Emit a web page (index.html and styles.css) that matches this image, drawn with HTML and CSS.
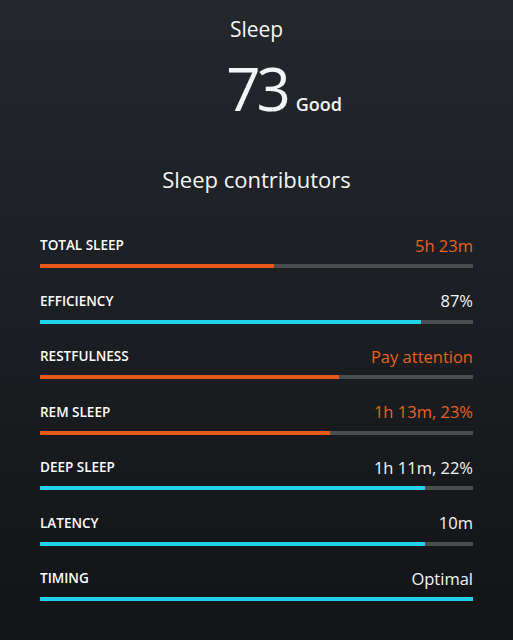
FILE: index.html
```html
<!DOCTYPE html>
<html lang="en">
<head>
  <meta charset="UTF-8" />
  <meta name="viewport" content="width=device-width, initial-scale=1.0"/>
  <title>Sleep</title>
  <link rel="stylesheet" href="styles.css">
</head>
<body>

  <header class="summary">
    <h1>Sleep</h1>
    <div class="score">
      <span></span>
      <span class="score-num">73</span>
      <span class="score-word">Good</span>
    </div>
  </header>

  <h2>Sleep contributors</h2>

  <ul class="contributors">
    <li>
      <div class="row"><span class="label">TOTAL SLEEP</span><span class="value warn">5h 23m</span></div>
      <div class="track"><div class="fill warn" style="width: 54%"></div></div>
    </li>
    <li>
      <div class="row"><span class="label">EFFICIENCY</span><span class="value">87%</span></div>
      <div class="track"><div class="fill" style="width: 88%"></div></div>
    </li>
    <li>
      <div class="row"><span class="label">RESTFULNESS</span><span class="value warn">Pay attention</span></div>
      <div class="track"><div class="fill warn" style="width: 69%"></div></div>
    </li>
    <li>
      <div class="row"><span class="label">REM SLEEP</span><span class="value warn">1h 13m, 23%</span></div>
      <div class="track"><div class="fill warn" style="width: 67%"></div></div>
    </li>
    <li>
      <div class="row"><span class="label">DEEP SLEEP</span><span class="value">1h 11m, 22%</span></div>
      <div class="track"><div class="fill" style="width: 89%"></div></div>
    </li>
    <li>
      <div class="row"><span class="label">LATENCY</span><span class="value">10m</span></div>
      <div class="track"><div class="fill" style="width: 89%"></div></div>
    </li>
    <li>
      <div class="row"><span class="label">TIMING</span><span class="value">Optimal</span></div>
      <div class="track"><div class="fill" style="width: 100%"></div></div>
    </li>
  </ul>

</body>
</html>
```

FILE: styles.css
```css
html {
  height: 100%;
  background: linear-gradient(#24282d, #121417);
}
body {
  margin: 0;
  padding: 0 40px;
  min-height: 640px;
  font-family: "Open Sans", sans-serif;
  color: #f4f5f6;
}
.summary {
  text-align: center;
}
h1 {
  margin: 0;
  padding-top: 15px;
  font-size: 21px;
  font-weight: 400;
  line-height: 28px;
}
.score {
  display: grid;
  grid-template-columns: 1fr auto 1fr;
  align-items: baseline;
  margin-top: 13px;
  line-height: 64px;
}
.score-num {
  font-size: 60px;
  font-weight: 400;
  letter-spacing: -4px;
}
.score-word {
  justify-self: start;
  margin-left: 9px;
  font-size: 18px;
  font-weight: 600;
}
h2 {
  margin: 28px 0 0;
  text-align: center;
  font-size: 22px;
  font-weight: 400;
  line-height: 30px;
}
.contributors {
  list-style: none;
  margin: 40px 0 0;
  padding: 0;
}
.contributors li {
  height: 55.5px;
}
.row {
  display: flex;
  justify-content: space-between;
  align-items: center;
  height: 22px;
}
.label {
  font-size: 13.5px;
  font-weight: 600;
  color: #fff;
}
.value {
  font-size: 16.5px;
}
.value.warn {
  color: #e8621e;
}
.track {
  margin-top: 8px;
  height: 4px;
  background: #4a4c50;
}
.fill {
  height: 100%;
  background: #1fd3e8;
}
.fill.warn {
  background: #e6591a;
}
```
